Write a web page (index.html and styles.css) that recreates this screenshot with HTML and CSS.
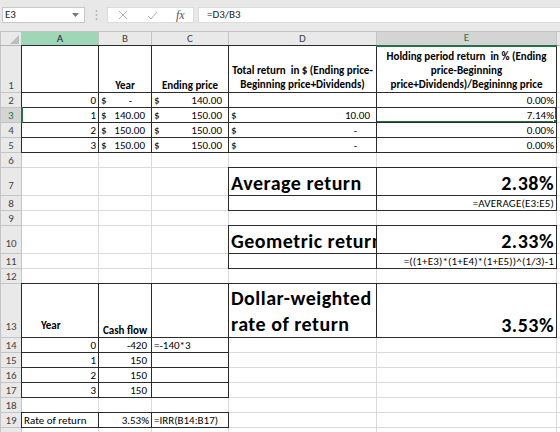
FILE: index.html
```html
<!DOCTYPE html>
<html>
<head>
	<link rel="stylesheet" href="styles.css">
</head>
<body>
	<div class="bar">
		<div class="namebox">E3<svg class="drop" width="7" height="4" viewBox="0 0 7 4"><path d="M0 0h7L3.5 4z" fill="#777"/></svg></div>
		<svg class="dots" width="3" height="12" viewBox="0 0 3 12"><circle cx="1.5" cy="2" r="1" fill="#b5b5b5"/><circle cx="1.5" cy="6" r="1" fill="#b5b5b5"/><circle cx="1.5" cy="10" r="1" fill="#b5b5b5"/></svg>
		<div class="fxbox">
			<svg class="ico" width="10" height="10" viewBox="0 0 10 10"><path d="M1 1l8 8M9 1l-8 8" stroke="#b0b0b0" stroke-width="1"/></svg>
			<svg class="ico" width="11" height="9" viewBox="0 0 11 9"><path d="M1 5l3 3 6-7" stroke="#b0b0b0" stroke-width="1" fill="none"/></svg>
			<span class="fx">fx</span>
		</div>
		<div class="formula">=D3/B3</div>
	</div>
	<table class="sheet">
		<colgroup>
			<col style="width:21px"><col style="width:77px"><col style="width:53px"><col style="width:77px"><col style="width:148px"><col style="width:180px"><col style="width:4px">
		</colgroup>
		<tr class="ch">
			<td class="corner"><svg width="9" height="9" viewBox="0 0 9 9"><path d="M9 0v9H0z" fill="#bcbcbc"/></svg></td>
			<td class="hl">A</td><td>B</td><td>C</td><td>D</td><td class="act">E</td><td></td>
		</tr>
		<tr class="r1">
			<td class="rh">1</td>
			<td class="b"></td>
			<td class="b bold ctr">Year</td>
			<td class="b bold ctr">Ending price</td>
			<td class="b bold ctr wrap">Total return&nbsp; in $ (Ending price-Beginning price+Dividends)</td>
			<td class="b bold ctr wrap">Holding period return&nbsp; in % (Ending price-Beginning price+Dividends)/Begininng price</td>
			<td></td>
		</tr>
		<tr>
			<td class="rh">2</td>
			<td class="b num">0</td>
			<td class="b"><div class="acct"><span>$</span><span class="dash">-</span></div></td>
			<td class="b"><div class="acct"><span>$</span><span>140.00</span></div></td>
			<td class="b"></td>
			<td class="b num">0.00%</td>
			<td></td>
		</tr>
		<tr>
			<td class="rh act">3</td>
			<td class="b num">1</td>
			<td class="b"><div class="acct"><span>$</span><span>140.00</span></div></td>
			<td class="b"><div class="acct"><span>$</span><span>150.00</span></div></td>
			<td class="b"><div class="acct"><span>$</span><span>10.00</span></div></td>
			<td class="b num sel">7.14%</td>
			<td></td>
		</tr>
		<tr>
			<td class="rh">4</td>
			<td class="b num">2</td>
			<td class="b"><div class="acct"><span>$</span><span>150.00</span></div></td>
			<td class="b"><div class="acct"><span>$</span><span>150.00</span></div></td>
			<td class="b"><div class="acct"><span>$</span><span class="dash">-</span></div></td>
			<td class="b num">0.00%</td>
			<td></td>
		</tr>
		<tr>
			<td class="rh">5</td>
			<td class="b num">3</td>
			<td class="b"><div class="acct"><span>$</span><span>150.00</span></div></td>
			<td class="b"><div class="acct"><span>$</span><span>150.00</span></div></td>
			<td class="b"><div class="acct"><span>$</span><span class="dash">-</span></div></td>
			<td class="b num">0.00%</td>
			<td></td>
		</tr>
		<tr><td class="rh">6</td><td></td><td></td><td></td><td></td><td></td><td></td></tr>
		<tr class="big">
			<td class="rh">7</td><td></td><td></td><td></td>
			<td class="b title">Average return</td>
			<td class="b title num">2.38%</td>
			<td></td>
		</tr>
		<tr>
			<td class="rh">8</td><td></td><td></td><td></td>
			<td class="b"></td>
			<td class="b num small">=AVERAGE(E3:E5)</td>
			<td></td>
		</tr>
		<tr><td class="rh">9</td><td></td><td></td><td></td><td></td><td></td><td></td></tr>
		<tr class="big">
			<td class="rh">10</td><td></td><td></td><td></td>
			<td class="b title">Geometric return</td>
			<td class="b title num">2.33%</td>
			<td></td>
		</tr>
		<tr>
			<td class="rh">11</td><td></td><td></td><td></td>
			<td class="b"></td>
			<td class="b num small">=((1+E3)*(1+E4)*(1+E5))^(1/3)-1</td>
			<td></td>
		</tr>
		<tr><td class="rh">12</td><td></td><td></td><td></td><td></td><td></td><td></td></tr>
		<tr class="r13">
			<td class="rh">13</td>
			<td class="b bold year">Year</td>
			<td class="b bold ctr">Cash flow</td>
			<td class="b"></td>
			<td class="b title wrap">Dollar-weighted rate of return</td>
			<td class="b title num">3.53%</td>
			<td></td>
		</tr>
		<tr>
			<td class="rh">14</td>
			<td class="b num">0</td>
			<td class="b num pad">-420</td>
			<td class="b">=-140*3</td>
			<td></td><td></td><td></td>
		</tr>
		<tr>
			<td class="rh">15</td>
			<td class="b num">1</td>
			<td class="b num pad">150</td>
			<td class="b"></td>
			<td></td><td></td><td></td>
		</tr>
		<tr>
			<td class="rh">16</td>
			<td class="b num">2</td>
			<td class="b num pad">150</td>
			<td class="b"></td>
			<td></td><td></td><td></td>
		</tr>
		<tr>
			<td class="rh">17</td>
			<td class="b num">3</td>
			<td class="b num pad">150</td>
			<td class="b"></td>
			<td></td><td></td><td></td>
		</tr>
		<tr><td class="rh">18</td><td></td><td></td><td></td><td></td><td></td><td></td></tr>
		<tr>
			<td class="rh">19</td>
			<td class="b">Rate of return</td>
			<td class="b num">3.53%</td>
			<td class="b">=IRR(B14:B17)</td>
			<td></td><td></td><td></td>
		</tr>
		<tr><td class="rh"></td><td></td><td></td><td></td><td></td><td></td><td></td></tr>
	</table>
</body>
</html>
```

FILE: styles.css
```css
body {margin:0;width:560px;height:432px;overflow:hidden;background:#fff;font-family:"Carlito","Lato",sans-serif;font-size:11px;color:#000;}

/* formula bar */
.bar {height:31px;box-sizing:border-box;padding-top:7px;background:#e8e8e8;display:flex;align-items:flex-start;}
.namebox {margin-left:2px;width:83px;height:16px;box-sizing:border-box;border:1px solid #c8c8c8;background:#fff;padding-left:2px;line-height:14px;color:#222;display:flex;align-items:center;justify-content:space-between;padding-right:5px;}
.dots {margin:2px 9px 0 10px;}
.fxbox {width:87px;height:16px;box-sizing:border-box;background:#fff;border:1px solid #dcdcdc;display:flex;align-items:center;padding-left:10px;}
.fxbox .ico {margin-right:19px;}
.fx {font-family:"Liberation Serif",serif;font-style:italic;font-size:12px;color:#555;margin-left:-1px;}
.formula {margin-left:4px;flex:1;height:16px;box-sizing:border-box;background:#fff;border:1px solid #dcdcdc;border-right:0;padding-left:8px;line-height:14px;color:#222;}

/* grid */
.sheet {border-collapse:collapse;table-layout:fixed;width:560px;}
.sheet tr {height:15px;}
.sheet td {border:1px solid #dadada;padding:0 2px;vertical-align:bottom;white-space:nowrap;overflow:hidden;line-height:13px;}
.sheet td.b {border:1px double #2b2b2b;}
.sheet tr.ch {height:14px;}
.ch td {background:#e9e9e9;border:1px solid #c4c4c4;border-bottom-color:#b5b5b5;text-align:center;color:#444;line-height:12px;vertical-align:middle;}
.ch td.corner {text-align:right;vertical-align:bottom;padding:0 2px 1px 0;line-height:0;}
.ch td.hl {background:#a0d6b8;color:#222;}
.ch td.act {background:#d4d4d4;color:#217346;border-bottom:2px solid #217346;}
.sheet td.rh {background:#e9e9e9;border:1px solid #c4c4c4;color:#444;text-align:center;padding:0;}
.sheet td.rh.act {background:#d4d4d4;color:#217346;border-right:2px solid #217346;}

.sheet tr.r1 {height:47px;}
.sheet tr.big {height:28px;}
.sheet tr.r13 {height:54px;}
.big td.rh {padding-bottom:3px;}
.r13 td.rh {padding-bottom:4px;}

.bold {font-weight:bold;}
.ctr {text-align:center;}
.num {text-align:right;}
.pad {padding-right:4px !important;}
.sheet td.wrap {white-space:normal;line-height:14px;}
.acct {display:flex;justify-content:space-between;padding-right:4px;}
.acct .dash {padding-right:13px;}
.small {font-size:11px;letter-spacing:0.15px;}
.title {font-size:20px;font-weight:bold;letter-spacing:0.5px;line-height:24px !important;}
.r13 .title.wrap {line-height:26px !important;}
.year {padding-left:19px !important;padding-bottom:5px !important;}

/* active cell */
.sel {position:relative;}
.sel::after {content:"";position:absolute;left:-2px;top:-2px;right:-1px;bottom:-1px;border:2px solid #217346;}
.sel::before {content:"";position:absolute;right:-4px;bottom:-4px;width:5px;height:5px;background:#217346;border:1px solid #fff;z-index:1;}
```
